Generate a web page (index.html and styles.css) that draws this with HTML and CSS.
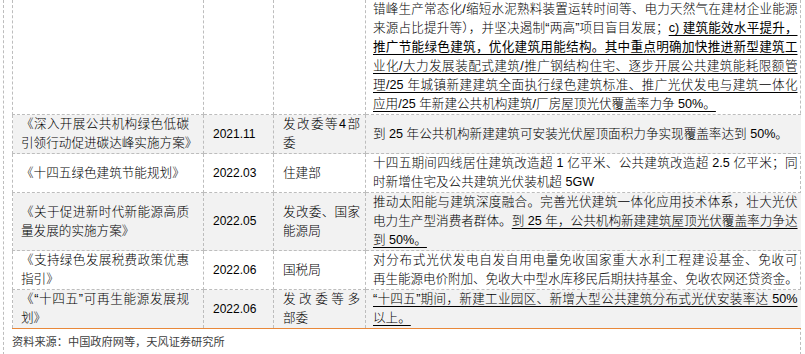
FILE: index.html
```html
<!DOCTYPE html>
<html lang="zh-CN">
<head>
<meta charset="utf-8">
<title>政策梳理</title>
<link rel="stylesheet" href="styles.css">
</head>
<body>
<div class="sheet">
  <table class="policy">
    <colgroup>
      <col class="c1"><col class="c2"><col class="c3"><col class="c4">
    </colgroup>
    <tbody>
      <tr>
        <td class="name"></td>
        <td class="date"></td>
        <td class="dept"></td>
        <td class="desc">
          <span class="ln j">错峰生产常态化/缩短水泥熟料装置运转时间等、电力天然气在建材企业能源</span>
          <span class="ln j">来源占比提升等），并坚决遏制“两高”项目盲目发展；<u><b>c) 建筑能效水平提升，</b></u></span>
          <span class="ln j"><u><b>推广节能绿色建筑，优化建筑用能结构。其中重点明确加快推进新型建筑工</b></u></span>
          <span class="ln j"><u>业化/大力发展装配式建筑/推广钢结构住宅、逐步开展公共建筑能耗限额管</u></span>
          <span class="ln j"><u>理/25 年城镇新建建筑全面执行绿色建筑标准、推广光伏发电与建筑一体化</u></span>
          <span class="ln"><u>应用/25 年新建公共机构建筑/厂房屋顶光伏覆盖率力争 50%。</u></span>
        </td>
      </tr>
      <tr class="alt">
        <td class="name"><span class="ln j">《深入开展公共机构绿色低碳</span><span class="ln">引领行动促进碳达峰实施方案》</span></td>
        <td class="date">2021.11</td>
        <td class="dept"><span class="ln j">发改委等4部</span><span class="ln">委</span></td>
        <td class="desc">到 25 年公共机构新建建筑可安装光伏屋顶面积力争实现覆盖率达到 50%。</td>
      </tr>
      <tr>
        <td class="name">《十四五绿色建筑节能规划》</td>
        <td class="date">2022.03</td>
        <td class="dept">住建部</td>
        <td class="desc">
          <span class="ln j">十四五期间四线居住建筑改造超 1 亿平米、公共建筑改造超 2.5 亿平米；同</span>
          <span class="ln">时新增住宅及公共建筑光伏装机超 5GW</span>
        </td>
      </tr>
      <tr class="alt">
        <td class="name"><span class="ln j">《关于促进新时代新能源高质</span><span class="ln">量发展的实施方案》</span></td>
        <td class="date">2022.05</td>
        <td class="dept"><span class="ln j">发改委、国家</span><span class="ln">能源局</span></td>
        <td class="desc">
          <span class="ln j">推动太阳能与建筑深度融合。完善光伏建筑一体化应用技术体系，壮大光伏</span>
          <span class="ln j">电力生产型消费者群体。<u>到 25 年，公共机构新建建筑屋顶光伏覆盖率力争达</u></span>
          <span class="ln"><u>到 50%。</u></span>
        </td>
      </tr>
      <tr>
        <td class="name"><span class="ln j">《支持绿色发展税费政策优惠</span><span class="ln">指引》</span></td>
        <td class="date">2022.06</td>
        <td class="dept">国税局</td>
        <td class="desc">
          <span class="ln j">对分布式光伏发电自发自用电量免收国家重大水利工程建设基金、免收可</span>
          <span class="ln tight">再生能源电价附加、免收大中型水库移民后期扶持基金、免收农网还贷资金。</span>
        </td>
      </tr>
      <tr class="alt">
        <td class="name"><span class="ln j">《“十四五”可再生能源发展规</span><span class="ln">划》</span></td>
        <td class="date">2022.06</td>
        <td class="dept"><span class="ln j">发改委等多</span><span class="ln">部委</span></td>
        <td class="desc">
          <span class="ln j"><u>“十四五”期间，新建工业园区、新增大型公共建筑分布式光伏安装率达 50%</u></span>
          <span class="ln"><u>以上。</u></span>
        </td>
      </tr>
    </tbody>
  </table>
  <p class="source">资料来源：中国政府网等，天风证券研究所</p>
</div>
</body>
</html>
```

FILE: styles.css
```css
html, body {
  margin: 0;
  padding: 0;
  background: #ffffff;
}

.sheet {
  margin-left: 3px;
  width: 788px;
  padding-left: 8px;
  border-left: 1px dashed #bdbdbd;
  border-right: 1px dashed #bdbdbd;
  border-bottom: 1px dashed #bdbdbd;
}

.policy {
  width: 788px;
  table-layout: fixed;
  border-collapse: collapse;
  font-family: "Liberation Sans", "Noto Sans CJK SC", sans-serif;
  font-size: 12.6px;
  font-weight: 300;
  line-height: 19px;
  color: #000;
}

.c1 { width: 191px; }
.c2 { width: 70px; }
.c3 { width: 92px; }
.c4 { width: 435px; }

.policy td {
  padding: 0;
  vertical-align: middle;
  border: 1px dashed #bdbdbd;
}

.policy tr:first-child td {
  border-top: none;
}

.policy tr:last-child td {
  border-bottom: 1px solid #e8883a;
}

.policy td.desc {
  border-right: none;
  padding: 0 3px 0 7px;
}

.policy tr.alt td {
  background: #f2f2f2;
}

.policy td.name {
  padding: 0 14px 0 8px;
}

.policy td.date {
  padding-left: 9px;
  font-size: 12px;
  font-weight: 400;
}

.policy td.dept {
  padding: 0 5px 0 9px;
}

.ln {
  display: block;
  white-space: nowrap;
}

.ln.j {
  text-align: justify;
  text-align-last: justify;
}

.ln.tight {
  letter-spacing: -0.1px;
}

b {
  font-weight: 400;
}

u {
  text-decoration: underline;
  text-decoration-thickness: 1px;
  text-underline-offset: 3px;
}

.source {
  margin: 0;
  height: 25px;
  line-height: 25px;
  font-family: "Noto Sans CJK SC", sans-serif;
  font-size: 11.2px;
  color: #404040;
}
```
